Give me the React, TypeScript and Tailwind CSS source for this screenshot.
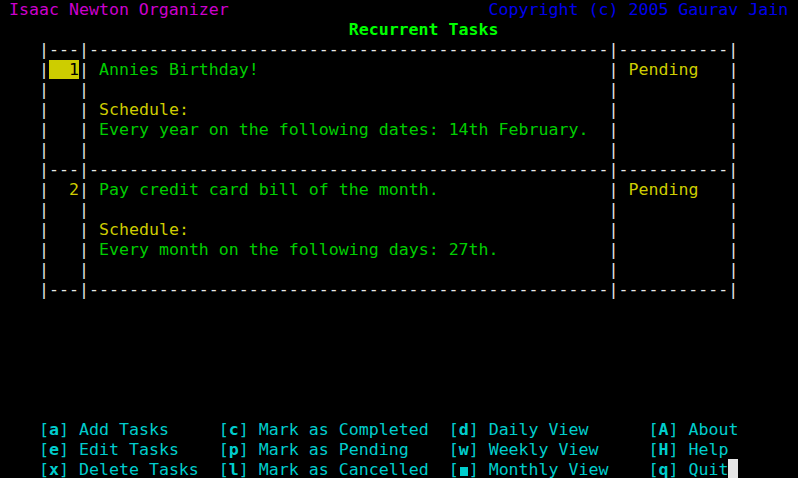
import React from "react";

type Seg = { t: string; c?: string };

const BORDER = "text-[#e5e5e5]";
const GREEN = "text-[#00cd00]";
const YELLOW = "text-[#cdcd00]";
const CYAN = "text-[#00cdcd]";

const tasks = [
    {
        id: "1",
        title: "Annies Birthday!",
        schedule: "Every year on the following dates: 14th February.",
        status: "Pending",
        selected: true,
    },
    {
        id: "2",
        title: "Pay credit card bill of the month.",
        schedule: "Every month on the following days: 27th.",
        status: "Pending",
        selected: false,
    },
];

const menu = [
    [
        ["a", "Add Tasks"],
        ["c", "Mark as Completed"],
        ["d", "Daily View"],
        ["A", "About"],
    ],
    [
        ["e", "Edit Tasks"],
        ["p", "Mark as Pending"],
        ["w", "Weekly View"],
        ["H", "Help"],
    ],
    [
        ["x", "Delete Tasks"],
        ["l", "Mark as Cancelled"],
        ["m", "Monthly View"],
        ["q", "Quit"],
    ],
];
const menuWidths = [18, 23, 20, 0];

const borderLine = (): Seg[] => [
    { t: "   " },
    { t: "|---|" + "-".repeat(52) + "|" + "-".repeat(11) + "|", c: BORDER },
];

const taskLine = (num: Seg, text: Seg, status: Seg): Seg[] => [
    { t: "   " },
    { t: "|", c: BORDER },
    num,
    { t: "|", c: BORDER },
    { t: " " },
    { t: text.t.padEnd(51), c: text.c },
    { t: "|", c: BORDER },
    { t: " " },
    { t: status.t.padEnd(10), c: status.c },
    { t: "|", c: BORDER },
];

const Row = ({ segs }: { segs: Seg[] }) => (
    <div className="h-[20px] leading-[20px] whitespace-pre">
        {segs.map((s, i) => (
            <span key={i} className={s.c}>
                {s.t}
            </span>
        ))}
    </div>
);

export default function App() {
    const rows: Seg[][] = [];

    rows.push([
        { t: "Isaac Newton Organizer".padEnd(48), c: "text-[#cd00cd]" },
        { t: "Copyright (c) 2005 Gaurav Jain", c: "text-[#0000ee]" },
    ]);
    rows.push([{ t: " ".repeat(34) }, { t: "Recurrent Tasks", c: "text-[#00ff00] font-bold" }]);
    rows.push(borderLine());

    tasks.forEach((task) => {
        const num: Seg = task.selected
            ? { t: task.id.padStart(3), c: "bg-[#cdcd00] text-black" }
            : { t: task.id.padStart(3), c: YELLOW };
        const blank: Seg = { t: "   " };
        rows.push(taskLine(num, { t: task.title, c: GREEN }, { t: task.status, c: YELLOW }));
        rows.push(taskLine(blank, { t: "" }, { t: "" }));
        rows.push(taskLine(blank, { t: "Schedule:", c: YELLOW }, { t: "" }));
        rows.push(taskLine(blank, { t: task.schedule, c: GREEN }, { t: "" }));
        rows.push(taskLine(blank, { t: "" }, { t: "" }));
        rows.push(borderLine());
    });

    while (rows.length < 21) rows.push([{ t: " " }]);

    return (
        <div className="w-[798px] h-[478px] overflow-hidden bg-black">
            <div
                className="pl-[9px] text-[16.6px]"
                style={{ fontFamily: '"DejaVu Sans Mono", "Liberation Mono", monospace' }}
            >
                {rows.map((segs, i) => (
                    <Row key={i} segs={segs} />
                ))}
                {menu.map((line, r) => (
                    <div key={r} className={`h-[20px] leading-[20px] whitespace-pre flex ${CYAN}`}>
                        <span>{"   "}</span>
                        {line.map(([key, label], c) => {
                            const text = `[${key}] ${label}`;
                            const pad = menuWidths[c] ? " ".repeat(Math.max(0, menuWidths[c] - text.length)) : "";
                            return (
                                <span key={c}>
                                    [
                                    {key === "m" ? (
                                        <span className="inline-block relative w-[10px] h-[20px] align-top">
                                            <span className="absolute left-[1px] top-[7px] w-[8px] h-[9px] bg-[#00cdcd] text-transparent overflow-hidden">
                                                m
                                            </span>
                                        </span>
                                    ) : (
                                        <span className="font-bold">{key}</span>
                                    )}
                                    ] {label}
                                    {pad}
                                </span>
                            );
                        })}
                        {r === 2 && <span className="inline-block w-[10px] h-[19px] mt-[-1px] bg-[#e5e5e5]" />}
                    </div>
                ))}
            </div>
        </div>
    );
}
